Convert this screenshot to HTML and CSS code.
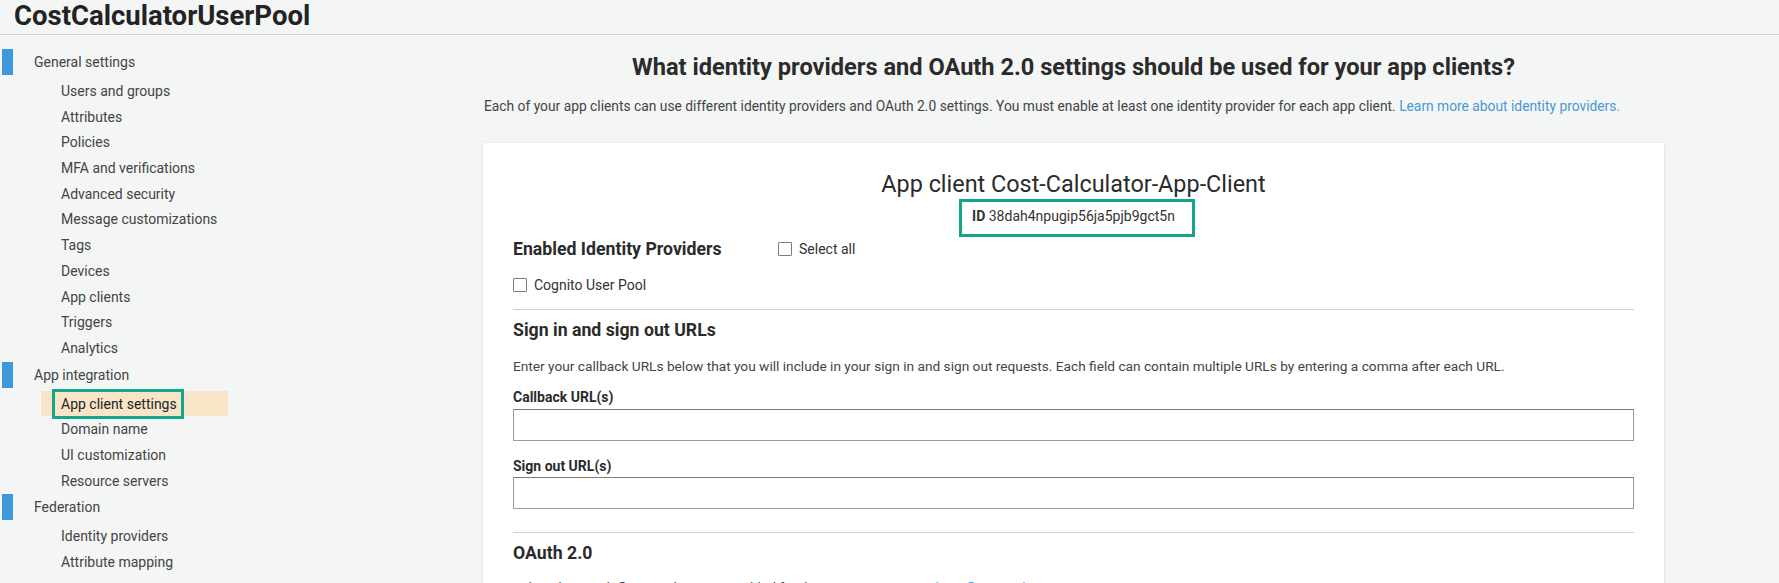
FILE: index.html
```html
<!DOCTYPE html>
<html lang="en">
<head>
<meta charset="utf-8">
<title>CostCalculatorUserPool</title>
<link rel="stylesheet" href="styles.css">
</head>
<body>
<header class="topbar">
  <h1 class="pool-title">CostCalculatorUserPool</h1>
</header>
<div class="layout">
  <nav class="sidebar">
    <div class="group-head"><span class="bar"></span><span>General settings</span></div>
    <ul class="items">
      <li>Users and groups</li>
      <li>Attributes</li>
      <li>Policies</li>
      <li>MFA and verifications</li>
      <li>Advanced security</li>
      <li>Message customizations</li>
      <li>Tags</li>
      <li>Devices</li>
      <li>App clients</li>
      <li>Triggers</li>
      <li>Analytics</li>
    </ul>
    <div class="group-head"><span class="bar"></span><span>App integration</span></div>
    <ul class="items">
      <li class="active"><span class="marked">App client settings</span></li>
      <li>Domain name</li>
      <li>UI customization</li>
      <li>Resource servers</li>
    </ul>
    <div class="group-head"><span class="bar"></span><span>Federation</span></div>
    <ul class="items">
      <li>Identity providers</li>
      <li>Attribute mapping</li>
    </ul>
  </nav>
  <main class="main">
    <h2 class="page-heading">What identity providers and OAuth 2.0 settings should be used for your app clients?</h2>
    <p class="intro">Each of your app clients can use different identity providers and OAuth 2.0 settings. You must enable at least one identity provider for each app client. <a class="link" href="#">Learn more about identity providers.</a></p>
    <section class="card">
      <h3 class="client-title">App client Cost-Calculator-App-Client</h3>
      <div class="client-id"><span class="id-box"><b>ID</b> 38dah4npugip56ja5pjb9gct5n</span></div>
      <div class="providers-row">
        <h4 class="section-title providers-title">Enabled Identity Providers</h4>
        <label class="check"><span class="box"></span>Select all</label>
      </div>
      <label class="check cognito"><span class="box"></span>Cognito User Pool</label>
      <hr class="divider">
      <h4 class="section-title">Sign in and sign out URLs</h4>
      <p class="desc">Enter your callback URLs below that you will include in your sign in and sign out requests. Each field can contain multiple URLs by entering a comma after each URL.</p>
      <div class="field-label">Callback URL(s)</div>
      <div class="text-input"></div>
      <div class="field-label signout">Sign out URL(s)</div>
      <div class="text-input"></div>
      <hr class="divider second">
      <h4 class="section-title oauth">OAuth 2.0</h4>
      <p class="desc oauth-desc">Select the OAuth flows and scopes enabled for this app. <a class="link" href="#">Learn more about flows and scopes.</a></p>
    </section>
  </main>
</div>
</body>
</html>
```

FILE: styles.css
```css
* { box-sizing: border-box; }

html, body {
  margin: 0;
  padding: 0;
  background: #f4f5f5;
  font-family: Roboto, "Noto Sans", sans-serif;
  color: #333;
  overflow: hidden;
  height: 583px;
}

.topbar {
  height: 35px;
  border-bottom: 1px solid #cfd1d1;
  padding-left: 14px;
}

.pool-title {
  margin: 0;
  font-size: 27.5px;
  line-height: 31px;
  font-weight: 700;
  color: #232323;
}

.layout {
  display: flex;
}

.sidebar {
  width: 250px;
  flex: none;
  padding-top: 14px;
  font-size: 14px;
  color: #444;
}

.group-head {
  display: flex;
  align-items: center;
  height: 26px;
  gap: 21px;
}

.group-head .bar {
  width: 11px;
  height: 26px;
  margin-left: 2px;
  background: #3f98db;
}

.items {
  list-style: none;
  margin: 3px 0 1px;
  padding: 0;
}

.items li {
  height: 25.7px;
  line-height: 23.7px;
  padding-top: 2px;
  margin-left: 41px;
  width: 187px;
  padding-left: 20px;
}

.items li.active {
  background: #f8e5c7;
  color: #222;
}

.marked {
  position: relative;
}

.marked::after {
  content: "";
  position: absolute;
  left: -9px;
  right: -7px;
  top: -7px;
  bottom: -7px;
  border: 3px solid #12a68b;
}

.main {
  flex: 1;
  padding: 0 115px 0 233px;
}

.page-heading {
  margin: 17px 0 0;
  font-size: 23.6px;
  line-height: 30px;
  font-weight: 700;
  text-align: center;
  color: #2b2b2b;
}

.intro {
  margin: 14px 0 0 1px;
  font-size: 13.8px;
  line-height: 20px;
  color: #444;
}

.link {
  color: #4a98d6;
  text-decoration: none;
}

.card {
  margin-top: 27px;
  background: #fff;
  box-shadow: 0 1px 3px rgba(0, 0, 0, 0.12);
  padding: 27px 30px 40px;
  min-height: 500px;
}

.client-title {
  margin: 0;
  text-align: center;
  font-size: 23.4px;
  line-height: 28px;
  font-weight: 400;
  color: #2b2b2b;
}

.client-id {
  margin-top: 10px;
  text-align: center;
  font-size: 14px;
  line-height: 17px;
  color: #333;
}

.id-box {
  position: relative;
  display: inline-block;
}

.id-box::after {
  content: "";
  position: absolute;
  left: -13px;
  right: -20px;
  top: -9px;
  bottom: -12px;
  border: 3px solid #12a68b;
}

.providers-row {
  display: flex;
  align-items: center;
  margin-top: 12px;
}

.section-title {
  margin: 0;
  font-size: 17.7px;
  line-height: 24px;
  font-weight: 700;
  color: #2b2b2b;
}

.providers-title {
  width: 265px;
}

.check {
  display: flex;
  align-items: center;
  gap: 7px;
  font-size: 14px;
  line-height: 24px;
  color: #333;
}

.check .box {
  width: 14px;
  height: 14px;
  border: 1px solid #7c7c7c;
  border-radius: 1px;
  background: #fff;
}

.cognito {
  margin-top: 12px;
}

.divider {
  margin: 12px 0 0;
  border: 0;
  border-top: 1px solid #cfcfcf;
  height: 0;
}

.divider + .section-title {
  margin-top: 8px;
}

.desc {
  margin: 14px 0 0;
  font-size: 13.7px;
  line-height: 20px;
  color: #444;
}

.field-label {
  margin-top: 11px;
  font-size: 14px;
  line-height: 20px;
  font-weight: 700;
  color: #2b2b2b;
}

.field-label.signout {
  margin-top: 15px;
}

.text-input {
  margin-top: 2px;
  height: 32px;
  border: 1px solid #9a9a9a;
  border-top-color: #7d7d7d;
  background: #fff;
}

.signout + .text-input {
  margin-top: 1px;
}

.divider.second {
  margin-top: 23px;
}

.section-title.oauth {
  margin-top: 8px;
}

.oauth-desc {
  margin-top: 12px;
}
```
